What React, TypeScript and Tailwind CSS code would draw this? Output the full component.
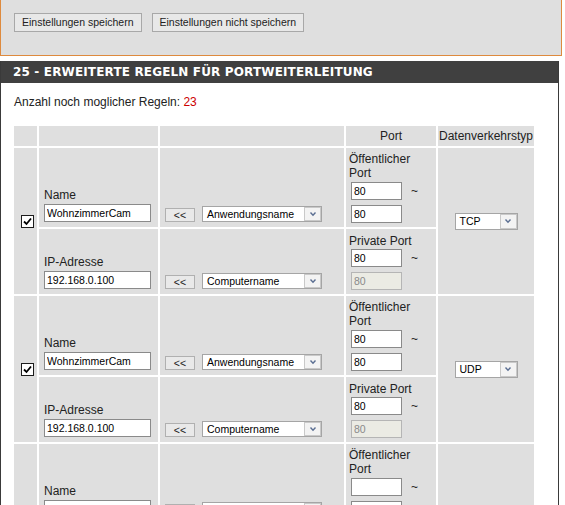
import React from 'react';

interface Rule {
  name: string;
  ip: string;
  pub: [string, string];
  priv: [string, string];
  proto: string;
  checked: boolean;
}

const rules: Rule[] = [
  { name: 'WohnzimmerCam', ip: '192.168.0.100', pub: ['80', '80'], priv: ['80', '80'], proto: 'TCP', checked: true },
  { name: 'WohnzimmerCam', ip: '192.168.0.100', pub: ['80', '80'], priv: ['80', '80'], proto: 'UDP', checked: true },
  { name: '', ip: '', pub: ['', ''], priv: ['', ''], proto: 'TCP', checked: false },
];

function Check({ checked }: { checked: boolean }) {
  return (
    <span className="w-[13px] h-[13px] border border-[#1c1c1c] bg-white flex items-center justify-center">
      {checked && (
        <svg width="9" height="9" viewBox="0 0 9 9">
          <path d="M1 4.5 L3.5 7 L8 1.5" fill="none" stroke="#000" strokeWidth="1.8" />
        </svg>
      )}
    </span>
  );
}

function Select({ label, className }: { label: string; className: string }) {
  return (
    <div className={`h-[16px] border border-[#a5a5a5] bg-white flex items-stretch text-[10.5px] ${className}`}>
      <span className="flex-1 pl-[4px] leading-[14px] text-black whitespace-nowrap overflow-hidden">{label}</span>
      <span className="w-[17px] border border-[#c9c9c9] bg-[#f3f3f3] flex items-center justify-center">
        <svg width="8" height="6" viewBox="0 0 8 6">
          <path d="M1.5 1.5 L4 4.2 L6.5 1.5" fill="none" stroke="#5a6e92" strokeWidth="1.4" />
        </svg>
      </span>
    </div>
  );
}

function Field({ value, className, disabled }: { value: string; className: string; disabled?: boolean }) {
  return (
    <input
      readOnly
      value={value}
      className={`h-[18px] border px-[2px] text-[10.5px] outline-none ${
        disabled ? 'bg-[#ebebe4] text-[#8a8a8a] border-[#b5b5b5]' : 'bg-white text-black border-[#8a8a8a]'
      } ${className}`}
    />
  );
}

function SmallBtn() {
  return (
    <div className="w-[30px] h-[14px] border border-[#b0b0b0] bg-[#e9e9e9] flex items-center justify-center text-[10.5px] leading-none">
      &lt;&lt;
    </div>
  );
}

export default function App() {
  return (
    <div className="w-[565px] h-[505px] overflow-hidden bg-white text-[12px] text-[#222] font-['Liberation_Sans',Arial,sans-serif]">
      {/* buttons */}
      <div className="w-[562px] h-[56px] bg-[#dfdfdf] border-x border-b border-[#de8a3e] flex items-start gap-[10px] pl-[13px] pt-[13px]">
        <button className="h-[19px] px-[7px] border border-[#a8a8a8] bg-[#e8e8e8] text-[10.5px] leading-none">
          Einstellungen speichern
        </button>
        <button className="h-[19px] px-[7px] border border-[#a8a8a8] bg-[#e8e8e8] text-[10.5px] leading-none">
          Einstellungen nicht speichern
        </button>
      </div>

      <div className="mt-[5px] w-[559px] border-x border-[#3a3a3a]">
        <div className="h-[22px] bg-[#404040] text-white font-bold text-[12px] tracking-[0.15px] pl-[12px] flex items-center font-['DejaVu_Sans',sans-serif]">
          25 - ERWEITERTE REGELN FÜR PORTWEITERLEITUNG
        </div>

        <div className="pl-[13px] pt-[12px] leading-[14px]">
          Anzahl noch moglicher Regeln: <span className="text-[#cc0000]">23</span>
        </div>

        {/* tabelle */}
        <div className="mt-[17px] ml-[13px] grid grid-cols-[23px_119px_184px_90px_96px] gap-[2px] leading-[14px]">
          <div className="h-[20px] bg-[#dfdfdf]" />
          <div className="bg-[#dfdfdf]" />
          <div className="bg-[#dfdfdf]" />
          <div className="bg-[#dfdfdf] flex items-center justify-center">Port</div>
          <div className="bg-[#dfdfdf] flex items-center justify-center">Datenverkehrstyp</div>

          {rules.map((r, i) => (
            <React.Fragment key={i}>
              <div className="row-span-2 bg-[#dfdfdf] flex items-center justify-center pl-[3px]">
                <Check checked={r.checked} />
              </div>
              <div className="h-[79px] bg-[#dfdfdf] flex flex-col justify-end px-[5px] pb-[5px]">
                <span className="mb-[2px]">Name</span>
                <Field value={r.name} className="w-[107px]" />
              </div>
              <div className="bg-[#dfdfdf] flex items-end gap-[7px] pl-[5px] pb-[5px]">
                <SmallBtn />
                <Select label="Anwendungsname" className="w-[120px]" />
              </div>
              <div className="bg-[#dfdfdf] flex flex-col justify-center px-[3px]">
                <span className="w-[70px]">Öffentlicher Port</span>
                <div className="flex items-center mt-[2px]">
                  <Field value={r.pub[0]} className="w-[51px] ml-[2px]" />
                  <span className="ml-[9px]">~</span>
                </div>
                <Field value={r.pub[1]} className="w-[51px] ml-[2px] mt-[5px]" />
              </div>
              <div className="row-span-2 bg-[#dfdfdf] flex items-center justify-center">
                <Select label={r.proto} className="w-[63px] h-[17px]" />
              </div>

              <div className="h-[65px] bg-[#dfdfdf] flex flex-col justify-end px-[5px] pb-[5px]">
                <span className="mb-[2px]">IP-Adresse</span>
                <Field value={r.ip} className="w-[107px]" />
              </div>
              <div className="bg-[#dfdfdf] flex items-end gap-[7px] pl-[5px] pb-[5px]">
                <SmallBtn />
                <Select label="Computername" className="w-[120px]" />
              </div>
              <div className="bg-[#dfdfdf] flex flex-col justify-center px-[3px]">
                <span>Private Port</span>
                <div className="flex items-center mt-[1px]">
                  <Field value={r.priv[0]} className="w-[51px] ml-[2px]" />
                  <span className="ml-[9px]">~</span>
                </div>
                <Field value={r.priv[1]} disabled className="w-[51px] ml-[2px] mt-[5px]" />
              </div>
            </React.Fragment>
          ))}
        </div>
      </div>
    </div>
  );
}
